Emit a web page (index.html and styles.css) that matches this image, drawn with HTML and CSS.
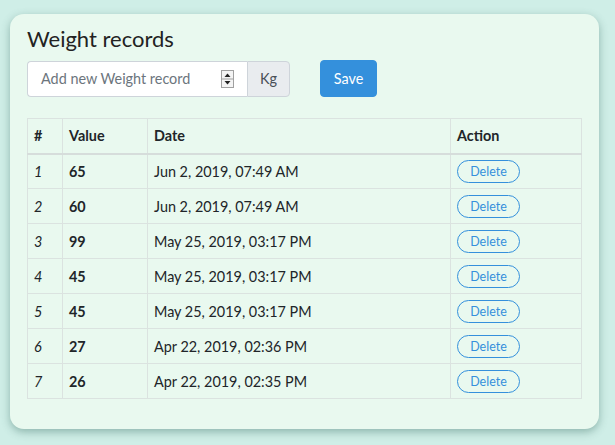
FILE: index.html
```html
<!DOCTYPE html>
<html>
<head>
<meta charset="utf-8">
<link rel="stylesheet" href="styles.css">
</head>
<body>
<div class="card">
  <h4 class="title">Weight records</h4>
  <div class="form-row">
    <div class="input-group">
      <div class="input">
        <span class="placeholder">Add new Weight record</span>
        <span class="spin">
          <svg width="13" height="18" viewBox="0 0 13 18">
            <rect x="0.5" y="0.5" width="12" height="17" fill="#f4f4f4" stroke="#a0a0a0"/>
            <line x1="1" y1="9" x2="12" y2="9" stroke="#a0a0a0"/>
            <path d="M6.5 3.5 L9.5 7 L3.5 7 Z" fill="#222"/>
            <path d="M6.5 14.5 L9.5 11 L3.5 11 Z" fill="#222"/>
          </svg>
        </span>
      </div>
      <div class="addon">Kg</div>
    </div>
    <button class="save">Save</button>
  </div>
  <table class="records">
    <thead>
      <tr><th class="c-num">#</th><th class="c-val">Value</th><th class="c-date">Date</th><th class="c-act">Action</th></tr>
    </thead>
    <tbody>
      <tr><td class="num">1</td><td class="val">65</td><td>Jun 2, 2019, 07:49 AM</td><td><button class="del">Delete</button></td></tr>
      <tr><td class="num">2</td><td class="val">60</td><td>Jun 2, 2019, 07:49 AM</td><td><button class="del">Delete</button></td></tr>
      <tr><td class="num">3</td><td class="val">99</td><td>May 25, 2019, 03:17 PM</td><td><button class="del">Delete</button></td></tr>
      <tr><td class="num">4</td><td class="val">45</td><td>May 25, 2019, 03:17 PM</td><td><button class="del">Delete</button></td></tr>
      <tr><td class="num">5</td><td class="val">45</td><td>May 25, 2019, 03:17 PM</td><td><button class="del">Delete</button></td></tr>
      <tr><td class="num">6</td><td class="val">27</td><td>Apr 22, 2019, 02:36 PM</td><td><button class="del">Delete</button></td></tr>
      <tr><td class="num">7</td><td class="val">26</td><td>Apr 22, 2019, 02:35 PM</td><td><button class="del">Delete</button></td></tr>
    </tbody>
  </table>
</div>
</body>
</html>
```
FILE: styles.css
```css
html, body {
  margin: 0;
  padding: 0;
  background: #cfeee7;
  width: 615px;
  height: 445px;
  overflow: hidden;
  font-family: Lato, "Noto Sans", sans-serif;
  color: #212529;
}
body {
  padding: 14px 16px 0 10px;
  box-sizing: border-box;
}
.card {
  width: 589px;
  height: 415px;
  box-sizing: border-box;
  background: #e9f9ef;
  border-radius: 14px;
  box-shadow: 0 3px 8px rgba(60, 110, 100, 0.45);
  padding: 11px 17px 0 17px;
}
.title {
  margin: 0;
  font-size: 22px;
  font-weight: 400;
  line-height: 28px;
  color: #222;
}
.form-row {
  display: flex;
  align-items: center;
  margin-top: 7px;
  gap: 30px;
}
.input-group {
  display: flex;
  height: 36px;
}
.input {
  width: 220px;
  box-sizing: border-box;
  background: #fff;
  border: 1px solid #ced4da;
  border-right: none;
  border-radius: 4px 0 0 4px;
  display: flex;
  align-items: center;
  justify-content: space-between;
  padding: 0 13px 0 13px;
  font-size: 14.4px;
}
.placeholder { color: #6c757d; }
.spin { display: flex; }
.addon {
  width: 43px;
  box-sizing: border-box;
  background: #e9ecef;
  border: 1px solid #ced4da;
  border-radius: 0 4px 4px 0;
  display: flex;
  align-items: center;
  justify-content: center;
  font-size: 14.4px;
  color: #495057;
}
.save {
  width: 57px;
  height: 37px;
  background: #3490dc;
  border: 1px solid #3490dc;
  border-radius: 4px;
  color: #fff;
  font-family: inherit;
  font-size: 14.4px;
  padding: 0;
}
.records {
  margin-top: 21px;
  width: 555px;
  border-collapse: collapse;
  font-size: 14.4px;
}
.records th, .records td {
  border: 1px solid #dbe3e0;
  padding: 0 6px;
  text-align: left;
  height: 35px;
  box-sizing: border-box;
}
.records th {
  font-weight: 700;
  border-bottom: 2px solid #d6dddb;
  height: 35px;
}
.c-num { width: 35px; }
.c-val { width: 85px; }
.c-date { width: 303px; }
.num { font-style: italic; }
.val { font-weight: 700; }
.del {
  height: 23px;
  width: 63px;
  padding: 0;
  background: transparent;
  border: 1px solid #3490dc;
  border-radius: 12px;
  color: #3490dc;
  font-family: inherit;
  font-size: 12.5px;
  display: block;
}
```
